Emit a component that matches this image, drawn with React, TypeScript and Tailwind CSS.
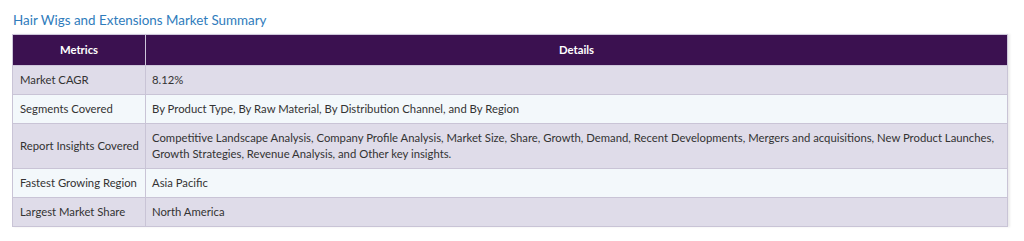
const ROWS = [
  { metric: "Market CAGR", details: "8.12%" },
  {
    metric: "Segments Covered",
    details: "By Product Type, By Raw Material, By Distribution Channel, and By Region"
  },
  {
    metric: "Report Insights Covered",
    details:
      "Competitive Landscape Analysis, Company Profile Analysis, Market Size, Share, Growth, Demand, Recent Developments, Mergers and acquisitions, New Product Launches, Growth Strategies, Revenue Analysis, and Other key insights."
  },
  { metric: "Fastest Growing Region", details: "Asia Pacific" },
  { metric: "Largest Market Share", details: "North America" }
];

export default function App() {
  return (
    <div className="h-[241px] w-[1024px] bg-white pl-[12px] pt-[11px] font-['Lato','Liberation_Sans',sans-serif]">
      <h2 className="mb-[5px] pl-[1px] text-[13.4px] leading-[18px] text-[#2f7cbc]">
        Hair Wigs and Extensions Market Summary
      </h2>
      <table className="w-[996px] table-fixed border-collapse text-[11.3px] leading-[16px] text-[#333] shadow-[2px_0_2px_rgba(0,0,0,0.08)]">
        <thead>
          <tr className="bg-[#3b1150] text-white">
            <th className="w-[133px] border border-[#cdc6da] px-[7px] py-[7px] text-center font-bold">Metrics</th>
            <th className="border border-[#cdc6da] px-[7px] py-[7px] text-center font-bold">Details</th>
          </tr>
        </thead>
        <tbody>
          {ROWS.map((row, i) => (
            <tr key={row.metric} className={i % 2 === 0 ? "bg-[#dfdce9]" : "bg-[#f3f8fb]"}>
              <td className="whitespace-nowrap border border-[#c9c4d6] pl-[7px] pr-[2px] py-[6px] align-middle">{row.metric}</td>
              <td className="border border-[#c9c4d6] px-[6px] py-[6px] align-middle">{row.details}</td>
            </tr>
          ))}
        </tbody>
      </table>
    </div>
  );
}
